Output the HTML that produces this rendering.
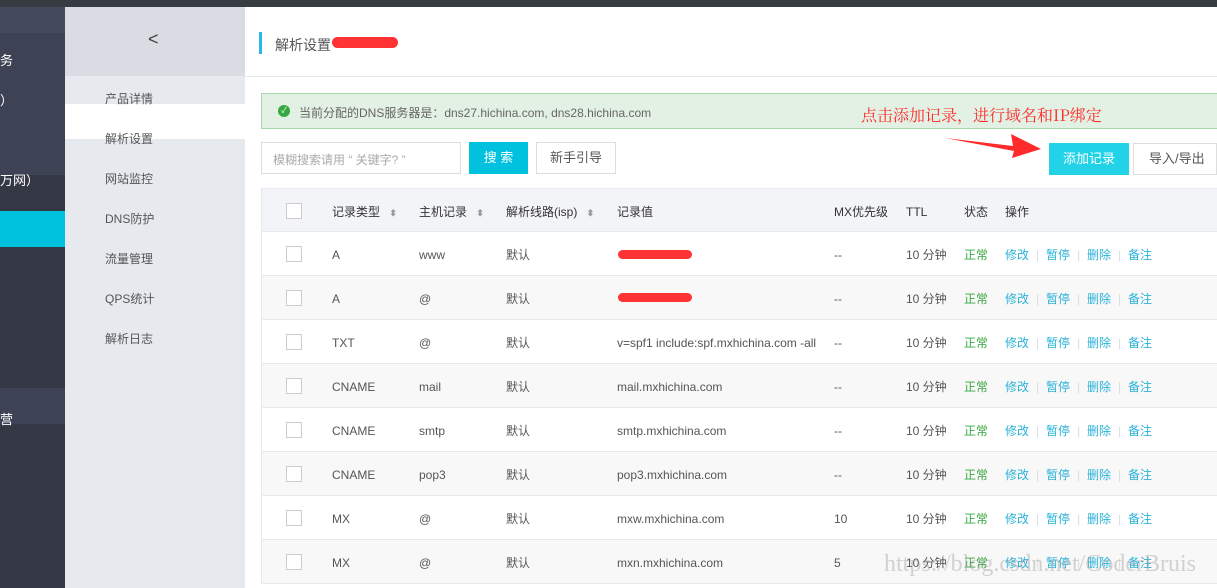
<!DOCTYPE html>
<html><head><meta charset="utf-8"><style>
*{margin:0;padding:0;box-sizing:border-box}
body{width:1217px;height:588px;overflow:hidden;position:relative;background:#fff;font-family:"Liberation Sans","Noto Sans CJK SC",sans-serif;font-size:12px;color:#333}
.a{position:absolute}
.nav div{position:absolute;left:105px;font-size:12px;color:#555}
.row{position:absolute;left:261px;width:956px;height:44px;border-bottom:1px solid #e6e9ee}
.row span{position:absolute;top:2px;line-height:43px;font-size:12px;color:#555;white-space:nowrap}
.cb{position:absolute;left:24px;top:14px;width:16px;height:16px;border:1px solid #ccc;background:#fff}
.lk{color:#2bb3d9!important}
.sep{color:#ddd!important}
</style></head><body>
<div class="a" style="left:0;top:0;width:1217px;height:7px;background:#373c43"></div>
<div class="a" style="left:0;top:7px;width:65px;height:581px;background:#343844"></div>
<div class="a" style="left:0;top:7px;width:65px;height:26px;background:#454a5c"></div>
<div class="a" style="left:0;top:33px;width:65px;height:142px;background:#3e4255"></div>
<div class="a" style="left:0;top:211px;width:65px;height:36px;background:#00c1de"></div>
<div class="a" style="left:0;top:388px;width:65px;height:36px;background:#3e4255"></div>
<div class="a" style="left:0;top:50px;color:#fff;font-size:13px">务</div>
<div class="a" style="left:0;top:90px;color:#fff;font-size:13px">）</div>
<div class="a" style="left:0;top:170px;color:#fff;font-size:13px">万网）</div>
<div class="a" style="left:0;top:409px;color:#fff;font-size:13px">营</div>
<div class="a" style="left:65px;top:7px;width:180px;height:581px;background:#e6e9ee"></div>
<div class="a" style="left:65px;top:7px;width:180px;height:69px;background:#d9dde3"></div>
<div class="a" style="left:148px;top:29px;font-size:18px;color:#444">&lt;</div>
<div class="a" style="left:65px;top:104px;width:180px;height:35px;background:#fff"></div>
<div class="nav">
<div style="top:90px">产品详情</div><div style="top:130px">解析设置</div><div style="top:170px">网站监控</div><div style="top:210px">DNS防护</div><div style="top:250px">流量管理</div><div style="top:290px">QPS统计</div><div style="top:330px">解析日志</div>
</div>
<div class="a" style="left:259px;top:32px;width:3px;height:22px;background:#29b6e8"></div>
<div class="a" style="left:275px;top:35px;font-size:14px;color:#555">解析设置</div>
<div class="a" style="left:332px;top:37px;width:66px;height:11px;background:#ff3333;border-radius:6px"></div>
<div class="a" style="left:245px;top:76px;width:972px;height:1px;background:#e6e9ee"></div>
<div class="a" style="left:261px;top:93px;width:956px;height:36px;background:#e2f1e3;border:1px solid #a8d8aa;border-right:none"></div>
<div class="a" style="left:278px;top:105px;width:12px;height:12px;border-radius:50%;background:#36a842;color:#fff;font-size:8px;line-height:12px;text-align:center">✓</div>
<div class="a" style="left:299px;top:104px;font-size:12px;color:#666">当前分配的DNS服务器是：dns27.hichina.com, dns28.hichina.com</div>
<div class="a" style="left:861px;top:103px;font-size:16px;color:#ff2a2a;font-family:'Noto Serif CJK SC',serif">点击添加记录，进行域名和IP绑定</div>
<div class="a" style="left:261px;top:142px;width:200px;height:32px;border:1px solid #ddd;color:#aaa;font-size:12px;padding:8px 11px">模糊搜索请用 “ 关键字? ”</div>
<div class="a" style="left:469px;top:142px;width:59px;height:32px;background:#00c1de;color:#fff;font-size:13px;text-align:center;line-height:32px">搜 索</div>
<div class="a" style="left:536px;top:142px;width:80px;height:32px;border:1px solid #ddd;color:#555;font-size:13px;text-align:center;line-height:30px">新手引导</div>
<svg class="a" style="left:945px;top:134px" width="100" height="24"><polygon points="0,4 68,12 66,0 96,15 67,24 69,17" fill="#ff2a2a"/></svg>
<div class="a" style="left:1049px;top:143px;width:80px;height:32px;background:#22d3e8;color:#fff;font-size:13px;text-align:center;line-height:32px">添加记录</div>
<div class="a" style="left:1133px;top:143px;width:84px;height:32px;border:1px solid #ddd;color:#555;font-size:13px;line-height:30px;padding-left:15px">导入/导出</div>
<div class="row" style="top:188px;background:#f3f4f8;border-top:1px solid #e6e9ee;border-left:1px solid #e6e9ee">
<div class="cb"></div>
<span style="left:70px;color:#333">记录类型 <b style="color:#999;font-size:9px;margin-left:6px">⬍</b></span>
<span style="left:157px;color:#333">主机记录 <b style="color:#999;font-size:9px;margin-left:6px">⬍</b></span>
<span style="left:244px;color:#333">解析线路(isp) <b style="color:#999;font-size:9px;margin-left:6px">⬍</b></span>
<span style="left:355px;color:#333">记录值</span>
<span style="left:572px;color:#333">MX优先级</span>
<span style="left:644px;color:#333">TTL</span>
<span style="left:702px;color:#333">状态</span>
<span style="left:743px;color:#333">操作</span>
</div>
<div id="rows"></div>
<script>
var d=[["A","www","",""],["A","@","",""],["TXT","@","v=spf1 include:spf.mxhichina.com -all","--"],["CNAME","mail","mail.mxhichina.com","--"],["CNAME","smtp","smtp.mxhichina.com","--"],["CNAME","pop3","pop3.mxhichina.com","--"],["MX","@","mxw.mxhichina.com","10"],["MX","@","mxn.mxhichina.com","5"]];
var h="";d.forEach(function(r,i){var mx=r[3]||"--";h+='<div class="row" style="top:'+(232+i*44)+'px;background:'+(i%2?'#f8f8f8':'#fff')+';border-left:1px solid #e6e9ee"><div class="cb"></div><span style="left:70px">'+r[0]+'</span><span style="left:157px">'+r[1]+'</span><span style="left:244px">默认</span><span style="left:355px">'+r[2]+'</span>'+(r[2]?'':'<i style="position:absolute;left:356px;top:'+(i?17:18)+'px;width:74px;height:9px;background:#ff3333;border-radius:5px"></i>')+'<span style="left:572px">'+mx+'</span><span style="left:644px">10 分钟</span><span style="left:702px;color:#3aa845">正常</span><span class="lk" style="left:743px">修改</span><span class="sep" style="left:774px">|</span><span class="lk" style="left:784px">暂停</span><span class="sep" style="left:815px">|</span><span class="lk" style="left:825px">删除</span><span class="sep" style="left:856px">|</span><span class="lk" style="left:866px">备注</span></div>'});
document.getElementById("rows").innerHTML=h;
</script>
<div class="a" style="left:884px;top:551px;font-size:24px;color:rgba(150,150,150,.4);font-family:'Liberation Serif',serif">https://blog.csdn.net/CoderBruis</div>
</body></html>
